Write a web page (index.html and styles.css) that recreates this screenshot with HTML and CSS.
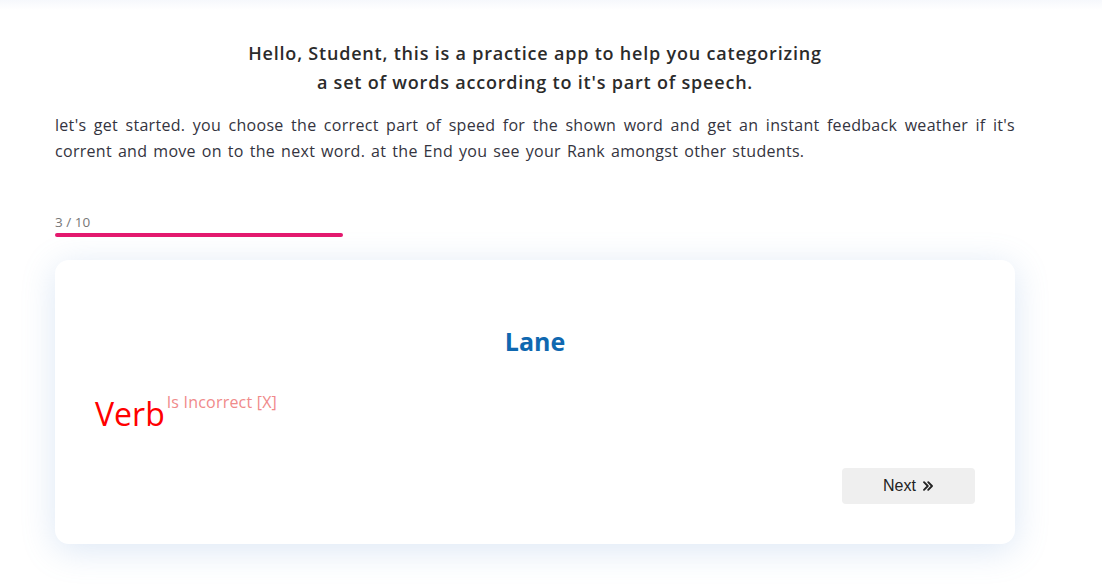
FILE: index.html
```html
<!DOCTYPE html>
<html>
<head>
<meta charset="utf-8">
<link rel="stylesheet" href="styles.css">
</head>
<body>
<div class="topbar"></div>
<main class="container">
  <h1 class="title">Hello, Student, this is a practice app to help you categorizing<br>a set of words according to it's part of speech.</h1>
  <p class="intro">let's get started. you choose the correct part of speed for the shown word and get an instant feedback weather if it's corrent and move on to the next word. at the End you see your Rank amongst other students.</p>
  <div class="progress">
    <div class="progress-label">3 / 10</div>
    <div class="progress-track"><div class="progress-bar" style="width:30%"></div></div>
  </div>
  <section class="card">
    <h2 class="word">Lane</h2>
    <div class="answer"><span class="choice">Verb</span><sup class="feedback">Is Incorrect [X]</sup></div>
    <div class="actions">
      <button class="next">Next
        <svg class="chev" viewBox="0 0 12 12" width="12" height="12"><path d="M2 2.2 L5.8 6 L2 9.8 M6.2 2.2 L10 6 L6.2 9.8" fill="none" stroke="#222" stroke-width="1.9" stroke-linecap="round" stroke-linejoin="round"/></svg>
      </button>
    </div>
  </section>
</main>
</body>
</html>
```
FILE: styles.css
```css
* { box-sizing: border-box; }
body {
  margin: 0;
  background: #fff;
  font-family: "Open Sans", "Noto Sans", sans-serif;
  color: #333;
}
.topbar {
  height: 10px;
  background: linear-gradient(#f6f8fc, #ffffff);
}
.container {
  width: 960px;
  margin-left: 55px;
  padding-top: 29px;
  padding-bottom: 40px;
}
.title {
  margin: 0;
  text-align: center;
  font-size: 18px;
  letter-spacing: 0.8px;
  line-height: 29px;
  font-weight: 600;
  color: #2b2b2b;
}
.intro {
  margin: 15px 0 0;
  font-size: 16px;
  letter-spacing: 0.3px;
  word-spacing: 1.5px;
  line-height: 26px;
  text-align: justify;
  color: #343440;
}
.progress {
  margin-top: 50px;
}
.progress-label {
  font-size: 13.5px;
  line-height: 16px;
  color: #777;
}
.progress-track {
  margin-top: 3px;
  height: 4px;
}
.progress-bar {
  height: 4px;
  border-radius: 2px;
  background: #e4196e;
}
.card {
  margin-top: 23px;
  height: 284px;
  border-radius: 14px;
  background: #fff;
  box-shadow: 0 6px 34px rgba(110, 155, 215, 0.24);
  padding: 23px 40px 40px;
  display: flex;
  flex-direction: column;
}
.word {
  margin: 40px 0 0;
  text-align: center;
  font-size: 25px;
  line-height: 36px;
  font-weight: 700;
  color: #0f68b0;
}
.answer {
  margin-top: 32px;
  line-height: 45px;
}
.choice {
  font-size: 32px;
  color: #ff0000;
}
.feedback {
  font-size: 16px;
  letter-spacing: 0.2px;
  color: #f08a8a;
  vertical-align: 18px;
  line-height: 1;
  margin-left: 2px;
}
.actions {
  margin-top: auto;
  display: flex;
  justify-content: flex-end;
}
.next {
  width: 133px;
  height: 36px;
  border: none;
  border-radius: 4px;
  background: #efefef;
  font-family: "Liberation Sans", Arial, sans-serif;
  font-size: 16px;
  color: #222;
  display: flex;
  align-items: center;
  justify-content: center;
  gap: 6px;
  padding: 0;
}
.chev { display: block; }
```
